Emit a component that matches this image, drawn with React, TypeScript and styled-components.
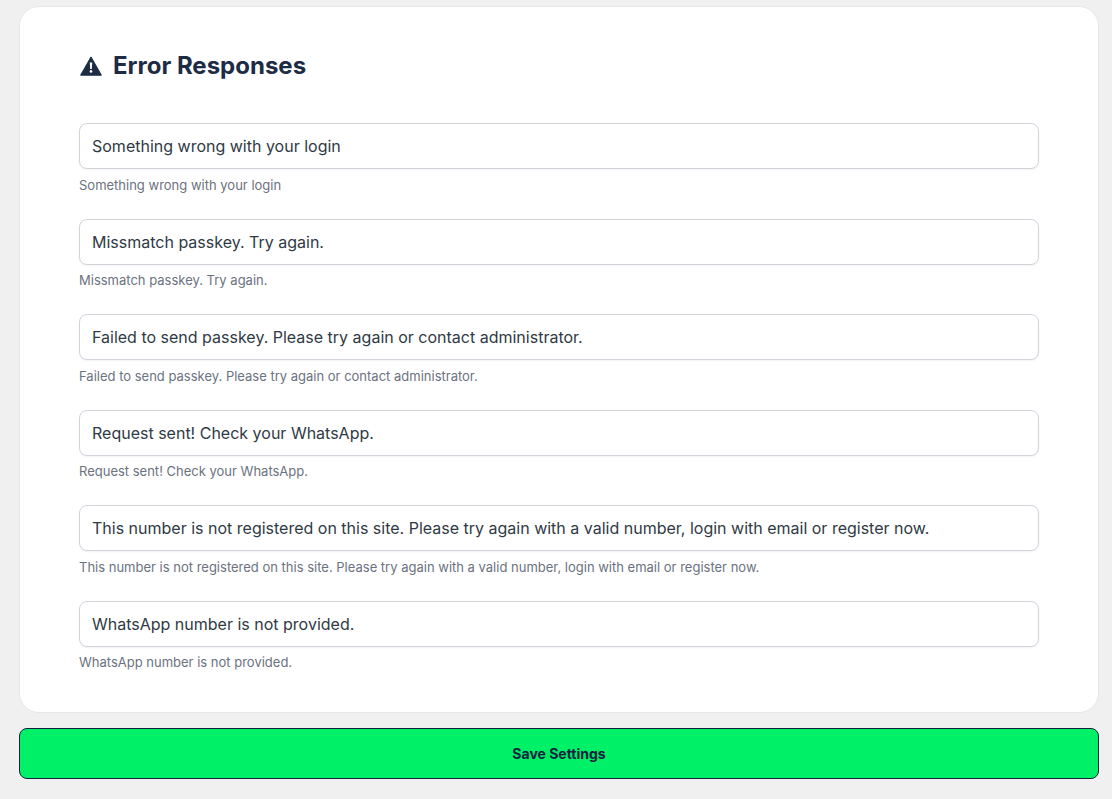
import React from "react";
import styled, { createGlobalStyle } from "styled-components";

const Global = createGlobalStyle`
  html, body { margin: 0; padding: 0; background: #f0f0f1; height: 100%; overflow: hidden; }
  * { box-sizing: border-box; }
  body { font-family: Inter, "Liberation Sans", sans-serif; }
`;

const Page = styled.div`
  padding: 6px 13px 0 19px;
  display: flex;
  flex-direction: column;
  gap: 15.5px;
`;

const Card = styled.section`
  background: #fff;
  border: 1px solid #e5e7eb;
  border-radius: 20px;
  padding: 41px 59px 40px 59px;
  height: 706.5px;
`;

const Heading = styled.h2`
  margin: 0 0 39px 1px;
  display: flex;
  align-items: center;
  gap: 11px;
  font-size: 24px;
  line-height: 36px;
  font-weight: 700;
  color: #1d2b45;
`;

const Fields = styled.div`
  display: flex;
  flex-direction: column;
  gap: 22px;
`;

const Field = styled.div`
  display: flex;
  flex-direction: column;
`;

const Input = styled.input`
  width: 100%;
  height: 46px;
  padding: 0 12px;
  border: 1px solid #d1d5db;
  border-radius: 8px;
  background: #fff;
  box-shadow: 0 1px 2px rgba(0, 0, 0, 0.05);
  font-family: inherit;
  font-size: 16px;
  color: #2f3a45;
  outline: none;
`;

const Help = styled.p`
  margin: 4.5px 0 0;
  font-size: 13px;
  line-height: 23px;
  color: #6b7280;
`;

const Save = styled.button`
  display: block;
  width: 100%;
  height: 51px;
  border: 1px solid #12213f;
  border-radius: 8px;
  background: #00f068;
  color: #12213f;
  font-family: inherit;
  font-size: 14px;
  font-weight: 700;
`;

const WarningIcon = () => (
  <svg width="22" height="20" viewBox="0 0 22 20" aria-hidden="true">
    <path
      d="M11 .9 21.4 19.2H.6Z"
      fill="currentColor"
      stroke="currentColor"
      strokeWidth="1"
      strokeLinejoin="round"
    />
    <path d="M9.8 6.6h2.4l-.35 6.4h-1.7Z" fill="#fff" />
    <circle cx="11" cy="15.4" r="1.3" fill="#fff" />
  </svg>
);

const messages = [
  "Something wrong with your login",
  "Missmatch passkey. Try again.",
  "Failed to send passkey. Please try again or contact administrator.",
  "Request sent! Check your WhatsApp.",
  "This number is not registered on this site. Please try again with a valid number, login with email or register now.",
  "WhatsApp number is not provided.",
];

export default function App() {
  return (
    <>
      <Global />
      <Page>
        <Card>
          <Heading>
            <WarningIcon />
            Error Responses
          </Heading>
          <Fields>
            {messages.map((m) => (
              <Field key={m}>
                <Input defaultValue={m} />
                <Help>{m}</Help>
              </Field>
            ))}
          </Fields>
        </Card>
        <Save>Save Settings</Save>
      </Page>
    </>
  );
}
